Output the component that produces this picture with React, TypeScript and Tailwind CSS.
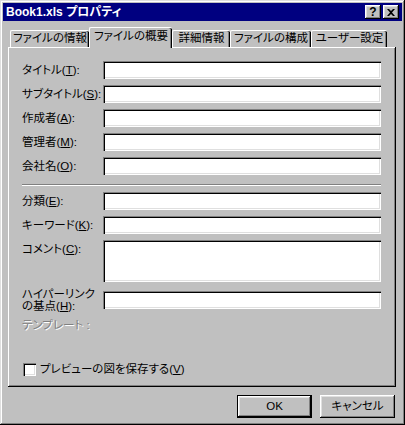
import React from 'react';

const raised = 'shadow-[inset_-1px_-1px_#000,inset_1px_1px_#fff,inset_-2px_-2px_#808080,inset_2px_2px_#dfdfdf]';
const sunken = 'shadow-[inset_1px_1px_#808080,inset_2px_2px_#000,inset_-1px_-1px_#fff,inset_-2px_-2px_#dfdfdf]';

const Label: React.FC<{ text: string; k: string }> = ({ text, k }) => (
    <span className="whitespace-nowrap">
        {text}(<u>{k}</u>):
    </span>
);

const Field: React.FC<{ text: string; k: string; mt?: string; tall?: boolean }> = ({ text, k, mt = 'mt-[6px]', tall }) => (
    <div className={`flex ${mt} ${tall ? 'items-start' : 'items-center'}`}>
        <div className="w-[81px] h-[18px] leading-[18px]">
            <Label text={text} k={k} />
        </div>
        <div className={`w-[278px] bg-white ${sunken} ${tall ? 'h-[42px]' : 'h-[18px]'}`} />
    </div>
);

const tabs = [
    { name: 'ファイルの情報', w: 'w-[79px]' },
    { name: 'ファイルの概要', w: 'w-[83px]', active: true },
    { name: '詳細情報', w: 'w-[58px]' },
    { name: 'ファイルの構成', w: 'w-[81px]' },
    { name: 'ユーザー設定', w: 'w-[76px]' },
];

export default function App() {
    return (
        <div className={`w-[405px] h-[425px] bg-[#c0c0c0] p-[3px] flex flex-col text-[11.5px] text-black font-['Liberation_Sans','Noto_Sans_CJK_JP',sans-serif] [font-feature-settings:'palt'] shadow-[inset_-1px_-1px_#000,inset_1px_1px_#dfdfdf,inset_-2px_-2px_#808080,inset_2px_2px_#fff]`}>
            {/* Title bar */}
            <div className="h-[18px] bg-[#000080] flex items-center justify-between pl-[3px] pr-[3px]">
                <span className="text-white font-bold text-[12px] leading-none">Book1.xls プロパティ</span>
                <div className="flex gap-[2px]">
                    <div className={`w-[16px] h-[14px] bg-[#c0c0c0] ${raised} flex items-center justify-center font-bold text-[12px] leading-none`}>?</div>
                    <div className={`w-[16px] h-[14px] bg-[#c0c0c0] ${raised} flex items-center justify-center`}>
                        <svg width="8" height="7" viewBox="0 0 8 7">
                            <path d="M0 0h2l2 2 2-2h2L5 3.5 8 7H6L4 5 2 7H0l3-3.5z" fill="#000" />
                        </svg>
                    </div>
                </div>
            </div>

            {/* Tabs */}
            <div className="flex h-[21px] mt-[6px] ml-[7px] items-start">
                {tabs.map((t) => (
                    <div
                        key={t.name}
                        className={`${t.w} flex items-center justify-center bg-[#c0c0c0] border-t border-l border-white rounded-tl-[2px] rounded-tr-[2px] shadow-[inset_-1px_0_#000,inset_-2px_0_#808080] whitespace-nowrap ${
                            t.active ? 'h-[21px] relative z-10 pb-[3px]' : 'h-[17px] mt-[3px]'
                        }`}
                    >
                        {t.name}
                    </div>
                ))}
            </div>

            {/* Panel */}
            <div className="-mt-px ml-[5px] w-[388px] h-[340px] pl-[14px] pt-[14px] shadow-[inset_-1px_-1px_#000,inset_1px_1px_#fff,inset_-2px_-2px_#808080]">
                <Field text="タイトル" k="T" mt="" />
                <Field text="サブタイトル" k="S" />
                <Field text="作成者" k="A" />
                <Field text="管理者" k="M" />
                <Field text="会社名" k="O" />

                <div className="mt-[9px] w-[359px] border-t border-[#808080] border-b border-b-white" />

                <Field text="分類" k="E" mt="mt-[6px]" />
                <Field text="キーワード" k="K" />
                <Field text="コメント" k="C" tall />

                <div className="flex items-center mt-[6px] h-[24px]">
                    <div className="w-[81px] leading-[12px] whitespace-nowrap">
                        ハイパーリンク
                        <br />
                        の基点(<u>H</u>):
                    </div>
                    <div className={`w-[278px] h-[18px] bg-white ${sunken}`} />
                </div>

                <div className="mt-[4px] h-[18px] leading-[18px] text-[#808080] [text-shadow:1px_1px_0_#fff]">テンプレート :</div>

                <div className="flex items-center mt-[27px] ml-[1px]">
                    <div className={`w-[13px] h-[13px] bg-white ${sunken}`} />
                    <span className="ml-[4px]">
                        プレビューの図を保存する(<u>V</u>)
                    </span>
                </div>
            </div>

            {/* Buttons */}
            <div className="flex justify-end gap-[8px] mt-[8px] pr-[7px]">
                <div className="w-[75px] h-[23px] border border-black">
                    <div className={`w-full h-full flex items-center justify-center ${raised}`}>OK</div>
                </div>
                <div className={`w-[75px] h-[23px] flex items-center justify-center ${raised}`}>キャンセル</div>
            </div>
        </div>
    );
}
